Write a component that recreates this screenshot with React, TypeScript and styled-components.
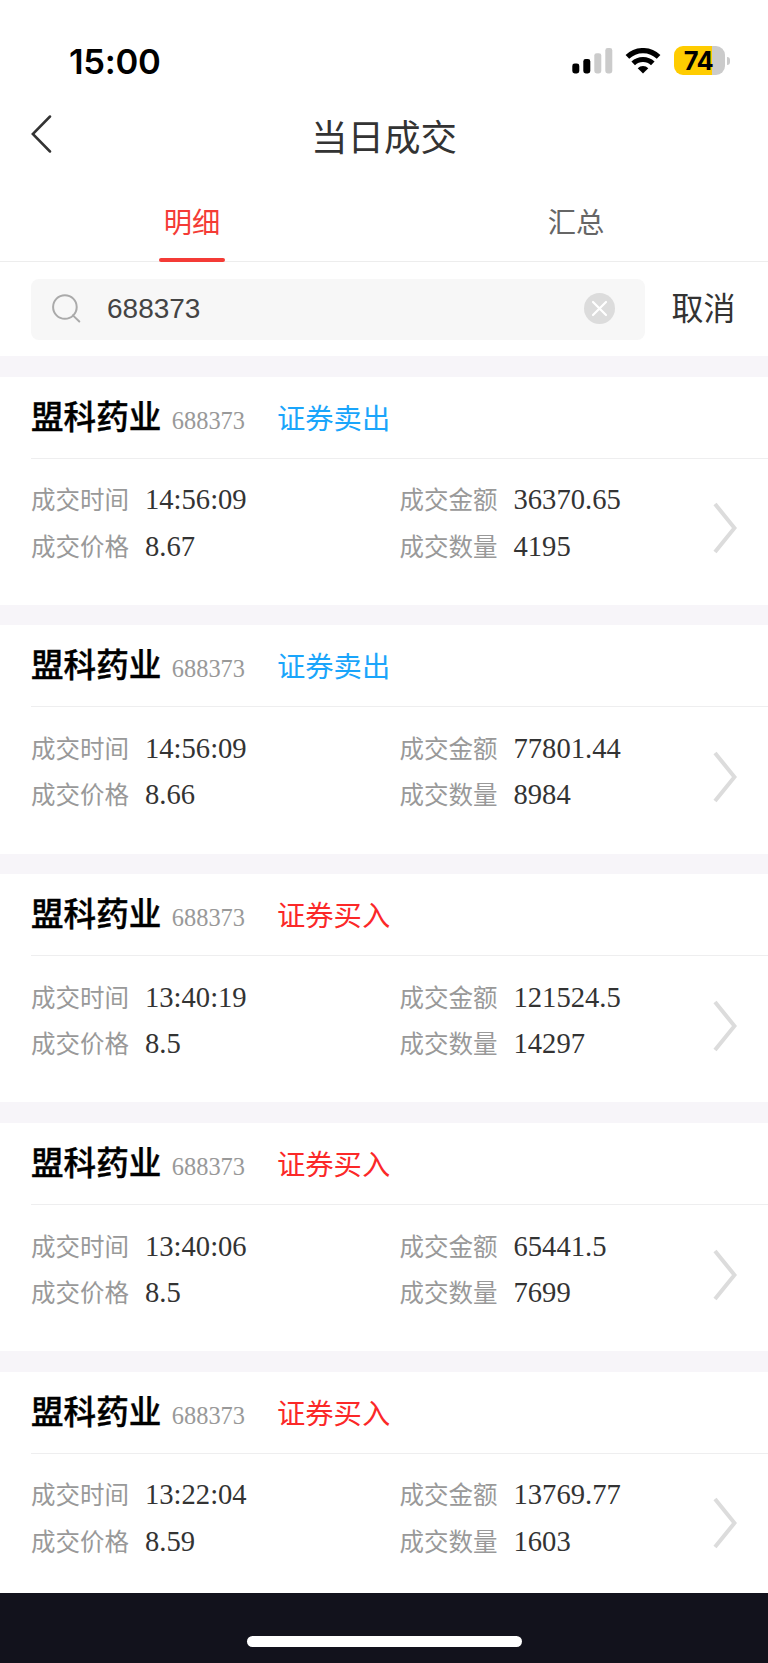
import React from "react";
import styled, { createGlobalStyle } from "styled-components";

const GlobalStyle = createGlobalStyle`
  * { box-sizing: border-box; }
  body { margin: 0; background: #fff; }
`;

const sans = `"Liberation Sans", "Noto Sans CJK SC", sans-serif`;
const cjk = `"Noto Sans CJK SC", sans-serif`;
const serif = `"Liberation Serif", "Noto Sans CJK SC", serif`;

const Screen = styled.div`
  width: 768px;
  height: 1663px;
  display: flex;
  flex-direction: column;
  overflow: hidden;
  background: #fff;
  font-family: ${cjk};
`;

const StatusBar = styled.div`
  height: 100px;
  padding: 21px 39px 0 69px;
  display: flex;
  align-items: center;
  justify-content: space-between;
`;

const Clock = styled.div`
  font: 600 34.6px/40px Inter, sans-serif;
  letter-spacing: -0.3px;
  color: #000;
`;

const StatusIcons = styled.div`
  display: flex;
  align-items: center;
`;

const WifiIcon = styled.svg`
  margin-left: 12px;
`;

const Battery = styled.div`
  position: relative;
  width: 51px;
  height: 29px;
  border-radius: 9px;
  margin: 0 4px 0 13px;
  background: linear-gradient(to right, #ffcc00 38px, #cbcbcb 38px);
  font: 700 25.5px/29px Inter, sans-serif;
  letter-spacing: -0.6px;
  text-align: center;
  text-indent: -2px;
  color: #000;
`;

const BatteryTip = styled.span`
  position: absolute;
  right: -5px;
  top: 10.5px;
  width: 3px;
  height: 8px;
  border-radius: 0 4px 4px 0;
  background: #cbcbcb;
`;

const NavBar = styled.header`
  height: 72px;
  padding: 0 31px;
  display: grid;
  grid-template-columns: 60px 1fr 60px;
  align-items: start;
`;

const BackIcon = styled.svg`
  margin-top: 15px;
`;

const Title = styled.h1`
  margin: 0;
  font-size: 36.5px;
  line-height: 71px;
  font-weight: 400;
  text-align: center;
  color: #333;
`;

const Tabs = styled.nav`
  height: 90px;
  display: flex;
  border-bottom: 1px solid #ededed;
`;

const Tab = styled.div<{ $active?: boolean }>`
  position: relative;
  flex: 1;
  padding-top: 28.5px;
  text-align: center;
  font-size: 28.3px;
  line-height: 40px;
  color: ${(p) => (p.$active ? "#f43b36" : "#666")};
`;

const TabLine = styled.span`
  position: absolute;
  left: 50%;
  bottom: -1px;
  width: 66px;
  height: 4px;
  margin-left: -33px;
  border-radius: 2px;
  background: #f43b36;
`;

const SearchRow = styled.div`
  height: 94px;
  padding: 17px 31px 16px;
  display: flex;
`;

const SearchBox = styled.div`
  width: 614px;
  height: 61px;
  padding: 0 30.5px 2px 21px;
  display: flex;
  align-items: center;
  border-radius: 8px;
  background: #f7f7f7;
`;

const Query = styled.span`
  flex: 1;
  margin-left: 26px;
  font: 28px/59px ${sans};
  color: #444;
`;

const Cancel = styled.button`
  margin: 0 0 0 26.5px;
  padding: 0;
  height: 55px;
  border: 0;
  background: none;
  font: 32px/55px ${cjk};
  color: #333;
`;

const List = styled.main`
  height: 1237px;
  padding-top: 0.3px;
  display: flex;
  flex-direction: column;
  overflow: hidden;
  background: #f7f5f9;
`;

const Card = styled.section`
  flex: none;
  height: 228.2px;
  margin-top: 20.5px;
  padding-left: 31px;
  background: #fff;
`;

const CardHead = styled.div`
  height: 82px;
  display: flex;
  align-items: baseline;
  border-bottom: 1px solid #eeeeef;
`;

const Name = styled.span`
  font-size: 32.6px;
  line-height: 76px;
  font-weight: 500;
  -webkit-text-stroke: 0.4px #000;
  color: #000;
`;

const Code = styled.span`
  margin-left: 10.5px;
  font: 24.4px/40px ${serif};
  color: #999;
`;

const Side = styled.span<{ $buy: boolean }>`
  margin-left: 32px;
  font-size: 28.3px;
  line-height: 40px;
  color: ${(p) => (p.$buy ? "#fb2828" : "#1aa5fb")};
`;

const CardBody = styled.div`
  display: grid;
  grid-template-columns: 368.5px 313.5px 30px;
  padding-top: 17.7px;
`;

const Column = styled.div`
  display: flex;
  flex-direction: column;
`;

const Field = styled.div`
  height: 46.3px;
  display: flex;
  align-items: baseline;
  line-height: 46px;
`;

const Label = styled.span`
  font-size: 24.5px;
  color: #999;
`;

const Value = styled.span`
  margin-left: 16px;
  font: 28.6px/46px ${serif};
  color: #333;
`;

const Arrow = styled.svg`
  margin-top: 26px;
`;

const HomeBar = styled.footer`
  flex: 1;
  padding-top: 43px;
  background: #12121c;
`;

const HomePill = styled.div`
  width: 275px;
  height: 11px;
  margin: 0 auto;
  border-radius: 6px;
  background: #fff;
`;

const trades = [
  { buy: false, time: "14:56:09", price: "8.67", amount: "36370.65", qty: "4195" },
  { buy: false, time: "14:56:09", price: "8.66", amount: "77801.44", qty: "8984" },
  { buy: true, time: "13:40:19", price: "8.5", amount: "121524.5", qty: "14297" },
  { buy: true, time: "13:40:06", price: "8.5", amount: "65441.5", qty: "7699" },
  { buy: true, time: "13:22:04", price: "8.59", amount: "13769.77", qty: "1603" },
];

function Item({ label, value }: { label: string; value: string }) {
  return (
    <Field>
      <Label>{label}</Label>
      <Value>{value}</Value>
    </Field>
  );
}

export default function App() {
  return (
    <Screen>
      <GlobalStyle />
      <StatusBar>
        <Clock>15:00</Clock>
        <StatusIcons>
          <svg width="41" height="26" viewBox="0 0 41 26">
            <rect x="0.3" y="15.5" width="7" height="10" rx="2.4" fill="#000" />
            <rect x="11.3" y="11" width="7" height="14.5" rx="2.4" fill="#000" />
            <rect x="22.3" y="5.2" width="7" height="20.3" rx="2.4" fill="#cbcbcb" />
            <rect x="33.3" y="0" width="7" height="25.5" rx="2.4" fill="#cbcbcb" />
          </svg>
          <WifiIcon width="36" height="26" viewBox="0 0 36 26">
            <g fill="none" stroke="#000" strokeWidth="5.2">
              <path d="M2.4 8.9A22.4 22.4 0 0 1 33.6 8.9" />
              <path d="M8.2 15.4A14.2 14.2 0 0 1 27.8 15.4" />
            </g>
            <path d="M12.7 20.2A7.7 7.7 0 0 1 23.3 20.2L18 25.6Z" fill="#000" />
          </WifiIcon>
          <Battery>
            74
            <BatteryTip />
          </Battery>
        </StatusIcons>
      </StatusBar>
      <NavBar>
        <BackIcon width="22" height="38" viewBox="0 0 22 38">
          <path d="M19 1.5L1.8 19L19 36.5" fill="none" stroke="#333" strokeWidth="2.5" strokeLinecap="round" />
        </BackIcon>
        <Title>当日成交</Title>
      </NavBar>
      <Tabs>
        <Tab $active>
          明细
          <TabLine />
        </Tab>
        <Tab>汇总</Tab>
      </Tabs>
      <SearchRow>
        <SearchBox>
          <svg width="29" height="29" viewBox="0 0 29 29">
            <g fill="none" stroke="#aaa" strokeWidth="2" strokeLinecap="round">
              <circle cx="12.9" cy="13" r="11.8" />
              <path d="M20.9 21.4L27.3 27.5" />
            </g>
          </svg>
          <Query>688373</Query>
          <svg width="31" height="31" viewBox="0 0 31 31">
            <circle cx="15.5" cy="15.5" r="15.5" fill="#dcdcdc" />
            <path d="M9 9L22 22M22 9L9 22" stroke="#fff" strokeWidth="2.2" strokeLinecap="round" />
          </svg>
        </SearchBox>
        <Cancel>取消</Cancel>
      </SearchRow>
      <List>
        {trades.map((t, i) => (
          <Card key={i}>
            <CardHead>
              <Name>盟科药业</Name>
              <Code>688373</Code>
              <Side $buy={t.buy}>{t.buy ? "证券买入" : "证券卖出"}</Side>
            </CardHead>
            <CardBody>
              <Column>
                <Item label="成交时间" value={t.time} />
                <Item label="成交价格" value={t.price} />
              </Column>
              <Column>
                <Item label="成交金额" value={t.amount} />
                <Item label="成交数量" value={t.qty} />
              </Column>
              <Arrow width="24" height="52" viewBox="0 0 24 52">
                <path d="M2 2L21.5 26L2 50" fill="none" stroke="#dcdcdc" strokeWidth="4" />
              </Arrow>
            </CardBody>
          </Card>
        ))}
      </List>
      <HomeBar>
        <HomePill />
      </HomeBar>
    </Screen>
  );
}
